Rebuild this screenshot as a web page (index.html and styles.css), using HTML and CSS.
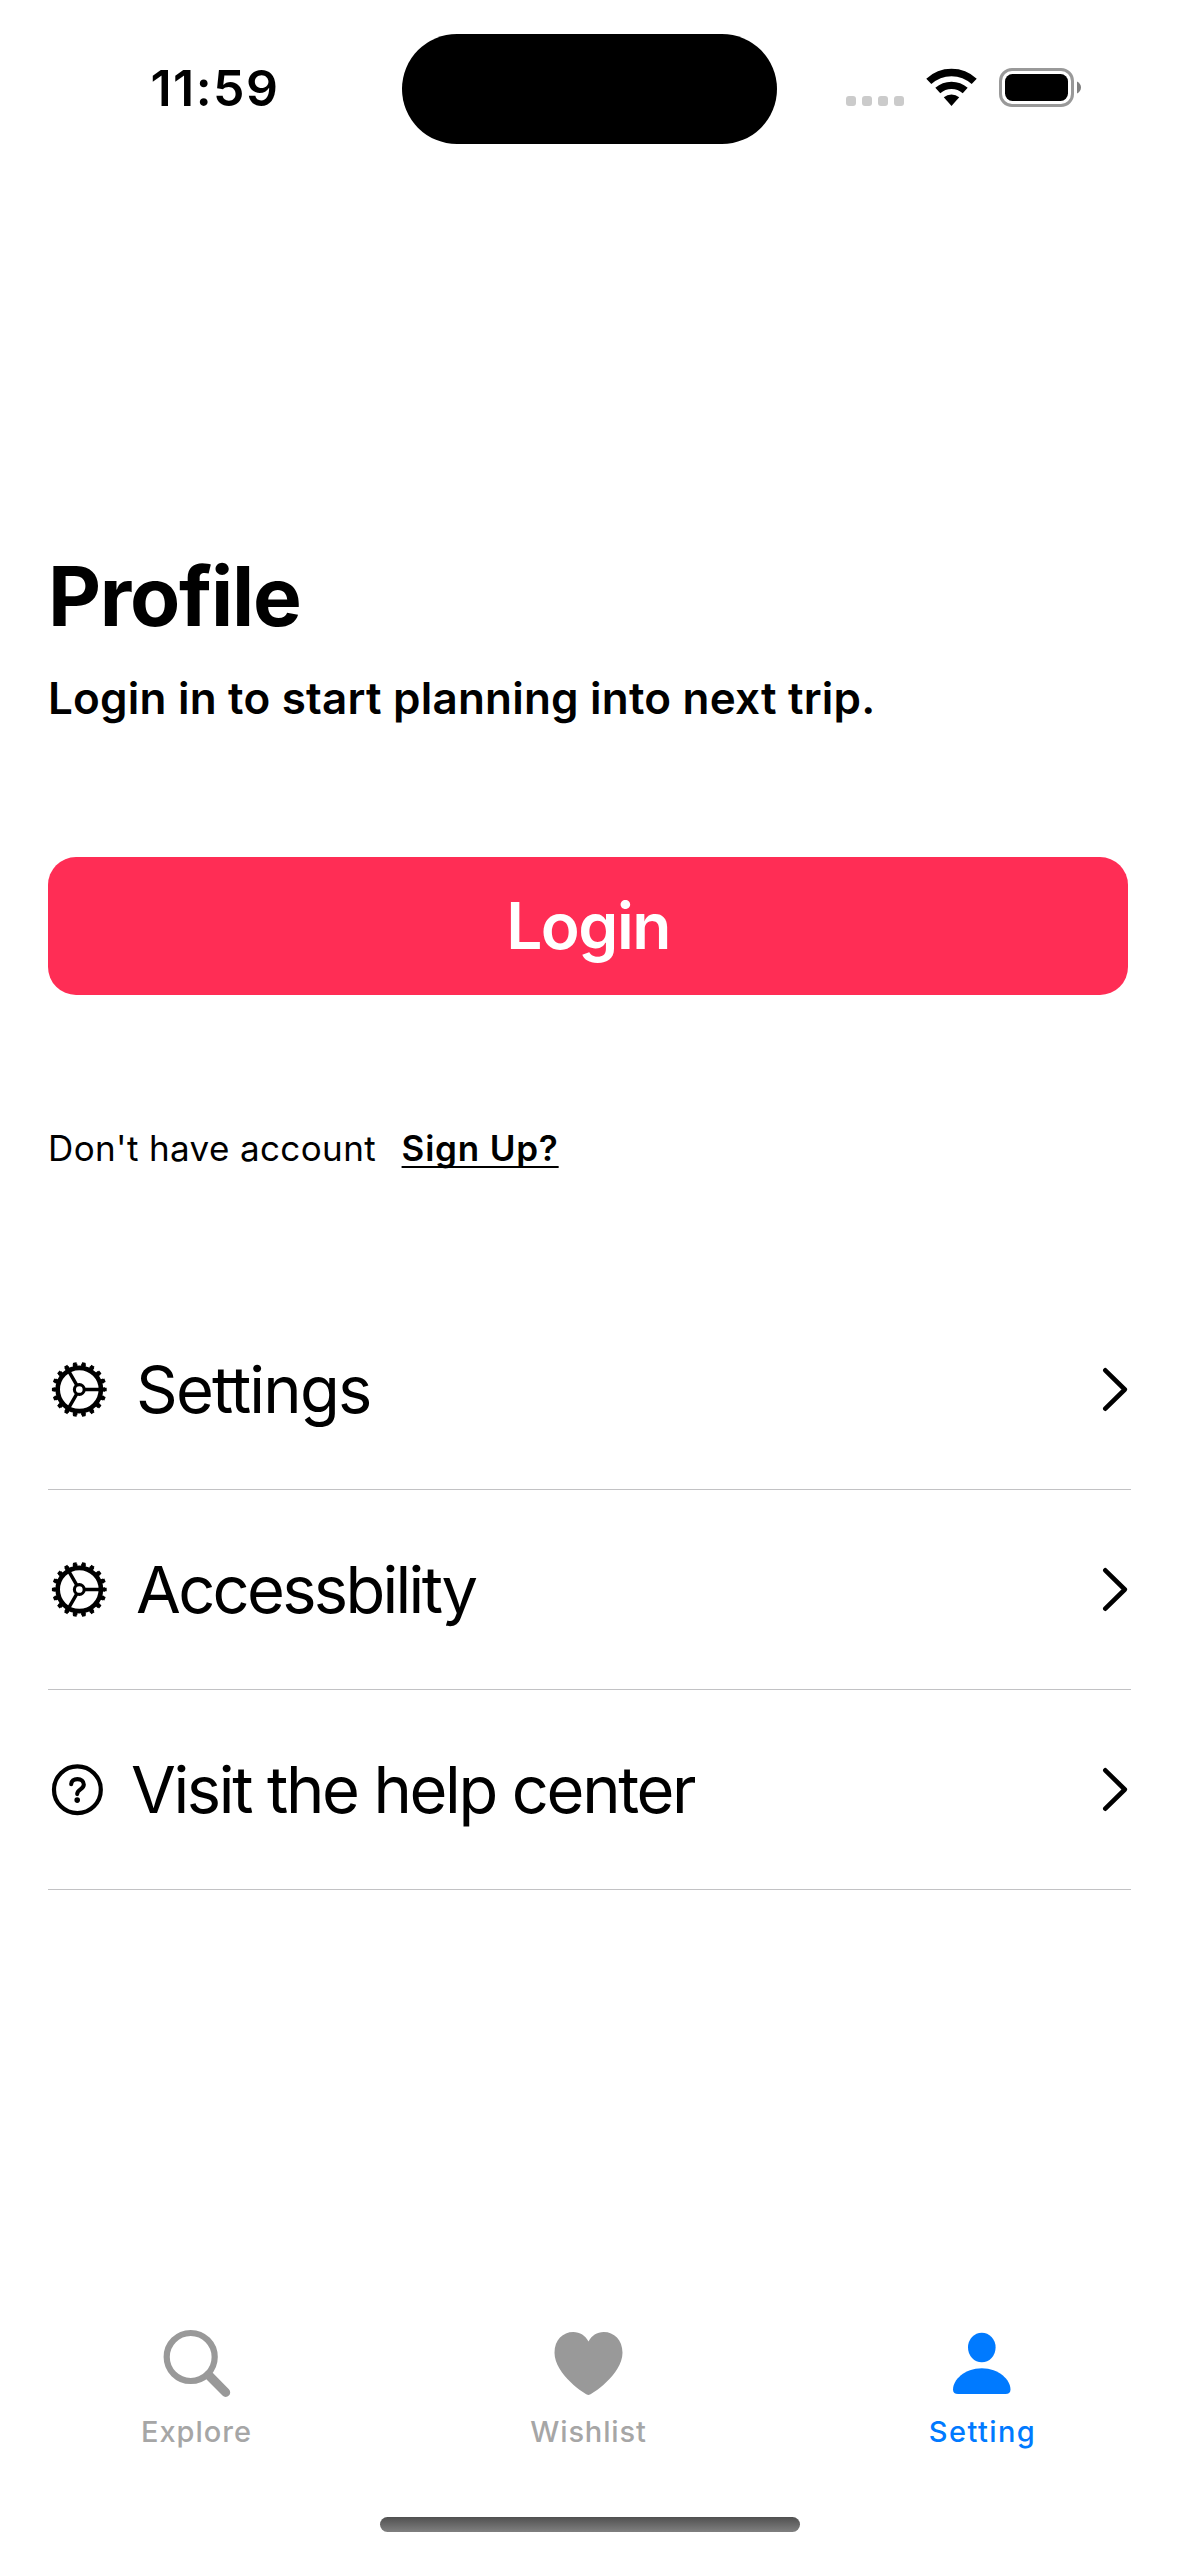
FILE: index.html
```html
<!DOCTYPE html>
<html lang="en">
<head>
<meta charset="utf-8">
<title>Profile</title>
<link rel="stylesheet" href="styles.css">
</head>
<body>
<svg class="defs" width="0" height="0" aria-hidden="true">
  <symbol id="gear" viewBox="0 0 62 62">
    <g fill="none" stroke="currentColor">
      <circle cx="31.3" cy="30.5" r="21.6" stroke-width="4.6"/>
      <circle cx="31.3" cy="30.5" r="24.4" stroke-width="3" pathLength="180" stroke-dasharray="5.4 4.6" stroke-dashoffset="2.7"/>
      <circle cx="31.3" cy="30.5" r="25.6" stroke-width="3.6" pathLength="180" stroke-dasharray="4 6" stroke-dashoffset="2"/>
      <circle cx="31.3" cy="30.5" r="4.9" stroke-width="3.1"/>
      <path stroke-width="3.4" d="M36.8 30.5H51M28.5 25.7L21.3 13.2M28.5 35.3L21.3 47.8"/>
    </g>
  </symbol>
  <symbol id="chevron" viewBox="0 0 26 46">
    <path d="M3.3 3.3L22.8 22.5L3.3 41.7" fill="none" stroke="currentColor" stroke-width="4.6" stroke-linecap="round" stroke-linejoin="round"/>
  </symbol>
</svg>

<header class="status">
  <div class="time">11:59</div>
  <div class="island"></div>
  <div class="indicators">
    <svg width="58" height="40" viewBox="0 0 58 40" fill="#cbcbcb">
      <rect x="0" y="29" width="10" height="10" rx="3"/>
      <rect x="16" y="29" width="10" height="10" rx="3"/>
      <rect x="32" y="29" width="10" height="10" rx="3"/>
      <rect x="48" y="29" width="10" height="10" rx="3"/>
    </svg>
    <svg width="51" height="40" viewBox="0 0 51 40" fill="none" stroke="#000" stroke-width="7.4">
      <path d="M2.8 14.4A33.3 33.3 0 0 1 48.2 14.4"/>
      <path d="M11.8 23.6A20.5 20.5 0 0 1 39.2 23.6"/>
      <path d="M25.5 39L17.8 30.3A12 12 0 0 1 33.2 30.3Z" fill="#000" stroke="none"/>
    </svg>
    <svg width="82" height="40" viewBox="0 0 82 40">
      <rect x="1.5" y="2.5" width="72" height="36" rx="11.5" fill="none" stroke="#999" stroke-width="3"/>
      <rect x="6" y="7" width="63" height="27" rx="7.5"/>
      <path d="M78 14.5C80.4 15.6 82 17.8 82 20.5C82 23.2 80.4 25.4 78 26.5Z" fill="#808080"/>
    </svg>
  </div>
</header>

<main class="content">
  <h1 class="title">Profile</h1>
  <p class="subtitle">Login in to start planning into next trip.</p>
  <button class="login">Login</button>
  <p class="signup"><span>Don't have account</span><a class="signup-link">Sign Up?</a></p>

  <ul class="menu">
    <li class="row">
      <svg class="gear"><use href="#gear"/></svg>
      <span class="row-label settings">Settings</span>
      <svg class="chevron"><use href="#chevron"/></svg>
    </li>
    <li class="row">
      <svg class="gear"><use href="#gear"/></svg>
      <span class="row-label access">Accessbility</span>
      <svg class="chevron"><use href="#chevron"/></svg>
    </li>
    <li class="row">
      <svg class="help" viewBox="0 0 58 60">
        <circle cx="29.4" cy="29.7" r="23.4" fill="none" stroke="#000" stroke-width="4.2"/>
        <path d="M23.2 24.1C23.3 20.9 25.8 19.1 29.4 19.1C33.1 19.1 35.8 21.1 35.8 24.5C35.8 29.5 29.2 29.3 29.2 34.1" fill="none" stroke="#000" stroke-width="4.1" stroke-linecap="round"/>
        <circle cx="29.2" cy="40.1" r="2.8"/>
      </svg>
      <span class="row-label visit">Visit the help center</span>
      <svg class="chevron"><use href="#chevron"/></svg>
    </li>
  </ul>
</main>

<nav class="tabs">
  <a class="tab">
    <svg class="tab-icon" viewBox="0 0 80 80" fill="none" stroke="currentColor">
      <circle cx="33.7" cy="33" r="24" stroke-width="6.2"/>
      <path d="M51.5 51L68.7 68.4" stroke-width="9" stroke-linecap="round"/>
    </svg>
    <span class="tab-label explore">Explore</span>
  </a>
  <a class="tab">
    <svg class="tab-icon" viewBox="0 0 80 80" fill="currentColor">
      <path d="M38.5 71C36 71 4.5 50.5 4.5 28.7C4.5 16 13 8 23.2 8C30 8 35.5 11.8 38.5 17.5C41.5 11.8 47 8 53.8 8C64 8 72.5 16 72.5 28.7C72.5 50.5 41 71 38.5 71Z"/>
    </svg>
    <span class="tab-label wishlist">Wishlist</span>
  </a>
  <a class="tab active">
    <svg class="tab-icon" viewBox="0 0 80 80" fill="currentColor">
      <ellipse cx="38.8" cy="23.5" rx="13.8" ry="14.8"/>
      <path d="M15 70C11.8 70 10 68.5 10 65.5C10 56 21.5 44.3 38.8 44.3C56 44.3 67.5 56 67.5 65.5C67.5 68.5 65.7 70 62.5 70Z"/>
    </svg>
    <span class="tab-label setting">Setting</span>
  </a>
</nav>
<div class="home-indicator"></div>
</body>
</html>
```
FILE: styles.css
```css
* {
  box-sizing: border-box;
  margin: 0;
  padding: 0;
}

body {
  display: flex;
  flex-direction: column;
  width: 1179px;
  height: 2556px;
  background: #fff;
  color: #000;
  font-family: Inter, "Liberation Sans", sans-serif;
  white-space: nowrap;
}

.defs {
  position: absolute;
}

svg {
  display: block;
  flex: none;
}

/* Status bar */
.status {
  display: grid;
  grid-template-columns: 402px 375px 1fr;
  align-items: center;
  height: 177px;
}

.time {
  padding: 0 0 2px 150.5px;
  font-size: 50px;
  font-weight: 600;
  line-height: 60px;
  letter-spacing: 1.46px;
}

.island {
  height: 110.5px;
  margin-top: 1px;
  border-radius: 56px;
  background: #000;
}

.indicators {
  display: flex;
  gap: 22px;
  padding: 0 0 3px 69px;
}

/* Profile */
.content {
  padding: 370px 48px 0;
}

.title {
  font-size: 82px;
  font-weight: 700;
  line-height: 100px;
  letter-spacing: -1.26px;
}

.subtitle {
  margin-top: 24px;
  font-size: 44px;
  font-weight: 600;
  line-height: 54px;
  letter-spacing: 0.21px;
}

.login {
  display: block;
  width: 1080px;
  height: 138px;
  margin-top: 132px;
  border: 0;
  border-radius: 28px;
  background: #ff2d55;
  color: #fff;
  font: 600 64px/138px Inter, "Liberation Sans", sans-serif;
  letter-spacing: -1.48px;
}

.signup {
  display: flex;
  gap: 25.5px;
  margin-top: 132px;
  font-size: 35px;
  line-height: 42px;
  letter-spacing: 0.38px;
}

.signup-link {
  font-weight: 600;
  letter-spacing: 0.8px;
  text-decoration: underline;
  text-decoration-thickness: 2px;
  text-underline-offset: 5px;
  text-decoration-skip-ink: none;
}

/* Menu */
.menu {
  width: 1083px;
  margin-top: 121px;
  list-style: none;
}

.row {
  display: flex;
  align-items: center;
  gap: 26px;
  height: 200px;
  padding-right: 3px;
  border-bottom: 1px solid #c2c2c4;
}

.row-label {
  font-size: 65px;
  line-height: 80px;
}

.settings {
  letter-spacing: -1.8px;
}

.access {
  letter-spacing: -2.7px;
}

.visit {
  margin-left: -1px;
  letter-spacing: -2.36px;
}

.gear {
  width: 62px;
  height: 62px;
}

.help {
  width: 58px;
  height: 60px;
}

.chevron {
  width: 26px;
  height: 46px;
  margin-left: auto;
}

/* Tab bar */
.tabs {
  display: grid;
  grid-template-columns: repeat(3, 1fr);
  margin-top: auto;
}

.tab {
  display: flex;
  flex-direction: column;
  align-items: center;
  gap: 9.5px;
  color: #999;
}

.tab-icon {
  width: 80px;
  height: 80px;
}

.tab-label {
  color: #a6a6a6;
  font-size: 29px;
  font-weight: 500;
  line-height: 36px;
}

.explore {
  letter-spacing: 0.99px;
}

.wishlist {
  margin-right: 2px;
  letter-spacing: 0.85px;
}

.setting {
  letter-spacing: 1.42px;
}

.active,
.active .tab-label {
  color: #007aff;
}

.home-indicator {
  width: 420px;
  height: 15px;
  margin: 67.5px 0 24px 380px;
  border-radius: 8px;
  background: linear-gradient(#505050, #808080);
}
```
